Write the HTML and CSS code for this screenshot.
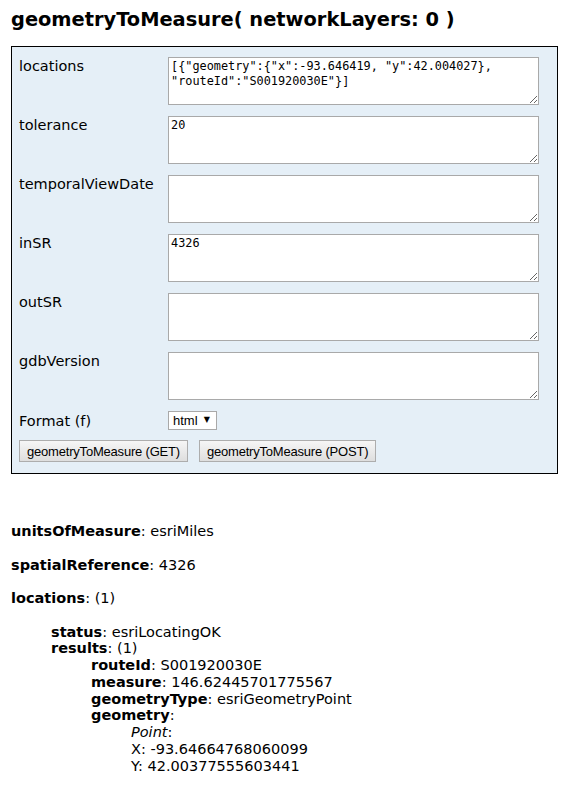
FILE: index.html
```html
<!DOCTYPE html>
<html>
<head>
<meta charset="utf-8">
<link rel="stylesheet" href="styles.css">
</head>
<body>
<h2 class="title">geometryToMeasure( networkLayers: 0 )</h2>
<form class="query-form">
  <div class="form-grid">
    <label class="lbl">locations</label>
    <textarea class="field">[{"geometry":{"x":-93.646419, "y":42.004027}, "routeId":"S001920030E"}]</textarea>
    <label class="lbl">tolerance</label>
    <textarea class="field">20</textarea>
    <label class="lbl">temporalViewDate</label>
    <textarea class="field"></textarea>
    <label class="lbl">inSR</label>
    <textarea class="field">4326</textarea>
    <label class="lbl">outSR</label>
    <textarea class="field"></textarea>
    <label class="lbl">gdbVersion</label>
    <textarea class="field"></textarea>
    <label class="lbl lbl-format">Format (f)</label>
    <div class="select-wrap"><select class="fmt"><option>html</option></select><span class="arrow">▼</span></div>
  </div>
  <div class="buttons">
    <button type="button" class="btn">geometryToMeasure (GET)</button>
    <button type="button" class="btn">geometryToMeasure (POST)</button>
  </div>
</form>

<div class="results">
  <p class="line"><b>unitsOfMeasure</b>: esriMiles</p>
  <p class="line"><b>spatialReference</b>: 4326</p>
  <p class="line"><b>locations</b>: (1)</p>
  <div class="nest">
    <div><b>status</b>: esriLocatingOK</div>
    <div><b>results</b>: (1)</div>
    <div class="nest">
      <div><b>routeId</b>: S001920030E</div>
      <div><b>measure</b>: 146.62445701775567</div>
      <div><b>geometryType</b>: esriGeometryPoint</div>
      <div><b>geometry</b>:</div>
      <div class="nest">
        <div><i>Point</i>:</div>
        <div>X: -93.64664768060099</div>
        <div>Y: 42.00377555603441</div>
      </div>
    </div>
  </div>
</div>
</body>
</html>
```
FILE: styles.css
```css
html, body {
  margin: 0;
  padding: 0;
  background: #ffffff;
}
body {
  padding: 0 14px 0 11px;
  font-family: "DejaVu Sans", Verdana, sans-serif;
  font-size: 14.5px;
  color: #000;
}
.title {
  margin: 0;
  padding-top: 8px;
  font-size: 19.4px;
  font-weight: bold;
  line-height: 23px;
  height: 38px;
}
.query-form {
  box-sizing: border-box;
  width: 547px;
  border: 1px solid #000;
  background: #e5eff7;
  padding: 10px 17px 11px 7px;
  margin: 0;
}
.form-grid {
  display: grid;
  grid-template-columns: 149px 1fr;
  row-gap: 11px;
  align-items: start;
}
.lbl {
  padding-top: 1px;
  line-height: 17px;
  font-size: 14.5px;
}
.lbl-format {
  padding-top: 2px;
}
.field {
  box-sizing: border-box;
  width: 371px;
  height: 48px;
  margin: 0;
  border: 1px solid #a9a9a9;
  background: #fff;
  padding: 1px 2px;
  font-family: "DejaVu Sans Mono", monospace;
  font-size: 11.85px;
  line-height: 14.5px;
  color: #000;
  resize: vertical;
}
.select-wrap {
  position: relative;
  width: 49px;
  height: 19px;
}
.fmt {
  appearance: none;
  -webkit-appearance: none;
  box-sizing: border-box;
  width: 49px;
  height: 19px;
  margin: 0;
  border: 1px solid #a9a9a9;
  border-radius: 0;
  background: #fff;
  padding: 0 0 0 4px;
  font-family: "Liberation Sans", Arial, sans-serif;
  font-size: 13px;
  color: #000;
}
.arrow {
  position: absolute;
  right: 7px;
  top: 4px;
  font-size: 8px;
  line-height: 10px;
  pointer-events: none;
}
.buttons {
  display: flex;
  gap: 11px;
  margin-top: 10px;
}
.btn {
  box-sizing: border-box;
  height: 22px;
  margin: 0;
  padding: 0 7px;
  border: 1px solid #adadad;
  border-radius: 0;
  background: linear-gradient(#f6f6f6, #dedede);
  font-family: "Liberation Sans", Arial, sans-serif;
  font-size: 13px;
  letter-spacing: -0.2px;
  color: #000;
}
.results {
  padding-top: 49px;
  line-height: 17px;
}
.line {
  margin: 0 0 16.5px 0;
}
.nest {
  padding-left: 40px;
  line-height: 16.8px;
}
```
